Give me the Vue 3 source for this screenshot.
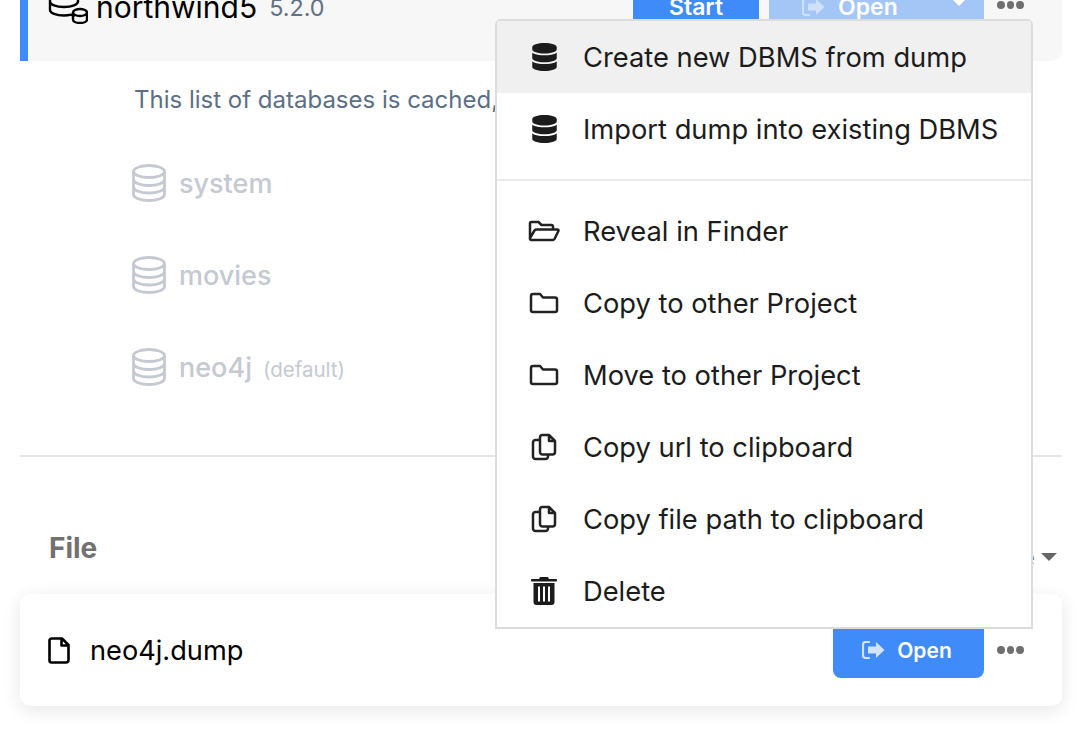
<script setup>
const db = { w: 25, h: 28, vb: '0 0 448 512', fill: true, d: 'M448 73.143v45.714C448 159.143 347.667 192 224 192S0 159.143 0 118.857V73.143C0 32.857 100.333 0 224 0s224 32.857 224 73.143zM448 176v102.857C448 319.143 347.667 352 224 352S0 319.143 0 278.857V176c48.125 33.143 136.208 48.572 224 48.572S399.874 209.143 448 176zm0 160v102.857C448 479.143 347.667 512 224 512S0 479.143 0 438.857V336c48.125 33.143 136.208 48.572 224 48.572S399.874 369.143 448 336z' }
const folderOpen = { w: 32, h: 22, vb: '0 0 32 22', d: 'M2 18V3.5A1.5 1.5 0 0 1 3.5 2h7l3 3h10A1.5 1.5 0 0 1 25 6.500V9M3.500 20A1.500 1.500 0 0 1 2 18L6.500 10.500A2 2 0 0 1 8 9.500H29.500A1 1 0 0 1 30.400 11L26.500 19A2 2 0 0 1 25 20Z' }
const folder = { w: 30, h: 22, vb: '0 0 30 22', d: 'M2 4a2 2 0 0 1 2-2h7l3 3.500h12a2 2 0 0 1 2 2V18a2 2 0 0 1-2 2H4a2 2 0 0 1-2-2z' }
const copy = { w: 26, h: 28, vb: '0 0 26 28', d: 'M9 4.500A2.500 2.500 0 0 1 11.500 2H18l6 6v11a2.500 2.500 0 0 1-2.500 2.500h-10A2.500 2.500 0 0 1 9 19zM18 2v6h6M9 7H4.500A2.500 2.500 0 0 0 2 9.500v14A2.500 2.500 0 0 0 4.500 26h10a2.500 2.500 0 0 0 2.500-2.500v-2' }
const trash = { w: 26, h: 28, vb: '0 0 26 28', fill: true, d: 'M9 0h8l1 2h7a1 1 0 0 1 0 2.500H1A1 1 0 0 1 1 2h7zM2.500 6h21v19a3 3 0 0 1-3 3h-15a3 3 0 0 1-3-3zM7 9.500v15h2v-15zM12 9.500v15h2v-15zM17 9.500v15h2v-15z' }

const groups = [
  [
    { label: 'Create new DBMS from dump', icon: db, active: true },
    { label: 'Import dump into existing DBMS', icon: db }
  ],
  [
    { label: 'Reveal in Finder', icon: folderOpen },
    { label: 'Copy to other Project', icon: folder },
    { label: 'Move to other Project', icon: folder },
    { label: 'Copy url to clipboard', icon: copy },
    { label: 'Copy file path to clipboard', icon: copy },
    { label: 'Delete', icon: trash }
  ]
]
const databases = [
  { name: 'system' },
  { name: 'movies' },
  { name: 'neo4j', note: '(default)' }
]
</script>

<template>
  <div class="page">
    <section class="dbms">
      <div class="dbms-title">
        <svg class="dbms-icon" width="40" height="40" viewBox="0 0 40 40" fill="none" stroke="#000" stroke-width="2.400">
          <ellipse cx="16" cy="9" rx="14" ry="5" />
          <path d="M2 9v17c0 3 6 5.500 14 5.500 2.500 0 5-.3 7-.8M30 9v9M2 17.500c0 3 6 5.500 14 5.500s14-2.500 14-5.500" />
          <path d="M23 30l3 3" />
          <ellipse cx="32" cy="28.500" rx="7" ry="3.500" fill="#f7f7f7" />
          <path d="M25 28.500v7c0 2 3 3.500 7 3.500s7-1.500 7-3.500v-7" />
        </svg>
        <span class="dbms-name">northwind5</span>
        <span class="dbms-version">5.2.0</span>
      </div>
      <div class="dbms-actions">
        <button class="btn start">Start</button>
        <button class="btn open-top">
          <svg class="signin" width="23" height="18" viewBox="0 0 23 18"><path d="M7 1H3.500A2.500 2.500 0 0 0 1 3.500v11A2.500 2.500 0 0 0 3.500 17H7" fill="none" stroke="currentColor" stroke-width="2.200" stroke-linecap="round" /><path d="M14 1l8.500 8-8.500 8v-4.500H6v-7h8z" fill="currentColor" /></svg>
          <span>Open</span>
          <i class="caret-top"></i>
        </button>
        <div class="dots top-dots"><i></i><i></i><i></i></div>
      </div>
    </section>

    <p class="cache-note">This list of databases is cached,</p>

    <ul class="db-list">
      <li v-for="d in databases" :key="d.name" class="db-row">
        <svg width="34" height="38" viewBox="0 0 34 38" fill="none" stroke="#c5c9d1" stroke-width="2.800">
          <ellipse cx="17" cy="7.500" rx="15.500" ry="6" />
          <path d="M1.500 7.500v23c0 3.300 7 6 15.500 6s15.500-2.700 15.500-6v-23M1.500 15.500c0 3.300 7 6 15.500 6s15.500-2.700 15.500-6M1.500 23c0 3.300 7 6 15.500 6s15.500-2.700 15.500-6" />
        </svg>
        <span class="db-name">{{ d.name }}</span>
        <span v-if="d.note" class="db-note">{{ d.note }}</span>
      </li>
    </ul>

    <hr class="rule" />

    <div class="files-head">
      <h2>File</h2>
      <div class="sort"><span>Name</span><i class="caret-sort"></i></div>
    </div>

    <div class="file-card">
      <svg class="file-icon" width="22" height="27" viewBox="0 0 22 27" fill="none" stroke="#000" stroke-width="2.600" stroke-linejoin="round">
        <path d="M1.500 3.500a2 2 0 0 1 2-2H14l6.500 6.500v15a2.500 2.500 0 0 1-2.500 2.500H3.500a2 2 0 0 1-2-2zM13.500 1.500v7h7" />
      </svg>
      <span class="file-name">neo4j.dump</span>
      <button class="btn open-file">
        <svg class="signin" width="23" height="18" viewBox="0 0 23 18"><path d="M7 1H3.500A2.500 2.500 0 0 0 1 3.500v11A2.500 2.500 0 0 0 3.500 17H7" fill="none" stroke="currentColor" stroke-width="2.200" stroke-linecap="round" /><path d="M14 1l8.500 8-8.500 8v-4.500H6v-7h8z" fill="currentColor" /></svg>
        <span>Open</span>
      </button>
      <div class="dots"><i></i><i></i><i></i></div>
    </div>

    <div class="menu">
      <div v-for="(group, g) in groups" :key="g" class="menu-group">
        <div v-for="item in group" :key="item.label" class="menu-item" :class="{ active: item.active }">
          <span class="menu-icon">
            <svg :width="item.icon.w" :height="item.icon.h" :viewBox="item.icon.vb">
              <path v-if="item.icon.fill" :d="item.icon.d" fill="#1c1c1c" fill-rule="evenodd" />
              <path v-else :d="item.icon.d" fill="none" stroke="#222" stroke-width="2.500" stroke-linejoin="round" />
            </svg>
          </span>
          <span>{{ item.label }}</span>
        </div>
      </div>
    </div>
  </div>
</template>

<style>
html, body { margin: 0; background: #fff; overflow: hidden; }
</style>

<style scoped>
.page {
  position: relative;
  height: 732px;
  overflow: hidden;
  padding: 0 20px;
  box-sizing: border-box;
  font-family: Inter, "Liberation Sans", sans-serif;
  color: #000;
}
.dbms {
  margin-top: -40px;
  height: 101px;
  background: #f7f7f7;
  border-left: 8px solid #3f8bfa;
  border-radius: 0 0 10px 0;
  padding: 0 38px 0 20px;
  display: flex;
  justify-content: space-between;
  box-sizing: border-box;
}
.dbms-title { display: flex; align-items: center; height: 94px; }
.dbms-icon { margin-right: 8px; margin-bottom: 6px; flex: none; }
.dbms-name { font-size: 30px; font-weight: 400; }
.dbms-version { font-size: 23.300px; color: #5f7286; margin-left: 12px; }
.dbms-actions { display: flex; align-items: center; height: 94px; }
.btn {
  border: 0;
  font-family: inherit;
  font-size: 21px;
  font-weight: 600;
  color: #fff;
  display: flex;
  align-items: center;
  justify-content: center;
  height: 56px;
  padding: 0;
}
.signin { margin-right: 12px; color: #d3e3fd; }
.start { width: 126px; background: #3f8bfa; border-radius: 8px; margin-right: 10px; font-size: 23px; }
.open-top {
  width: 215px;
  background: #a4c6f7;
  border-radius: 8px;
  position: relative;
  justify-content: flex-start;
  padding-left: 33px;
  box-sizing: border-box;
  font-size: 23px;
}
.open-top .signin { color: #cfe0fb; margin-right: 13px; }
.caret-top {
  position: absolute;
  right: 17px;
  top: 19px;
  border: 8px solid transparent;
  border-top-color: #fff;
  border-bottom: 0;
}
.dots { display: flex; gap: 2px; margin-left: 13px; width: 27px; flex: none; }
.dots i { width: 8px; height: 8px; border-radius: 50%; background: #6f6f6f; }
.top-dots { margin-bottom: 4px; }
.cache-note {
  margin: 24px 0 0 114px;
  font-size: 24px;
  line-height: 30px;
  color: #5c6f84;
}
.db-list { list-style: none; margin: 49px 0 0 112px; padding: 0; display: flex; flex-direction: column; gap: 54px; }
.db-row { display: flex; align-items: center; height: 38px; color: #c5c9d1; }
.db-name { font-size: 27px; font-weight: 500; margin-left: 13px; }
.db-note { font-size: 20.500px; margin-left: 11px; margin-top: 4px; }
.rule { border: 0; border-top: 2px solid #e6e6e6; margin: 69px 0 0; }
.files-head {
  display: flex;
  justify-content: space-between;
  align-items: center;
  padding: 0 5px 0 29px;
  margin-top: 73px;
  height: 36px;
  color: #717171;
}
.files-head h2 { margin: 0; font-size: 28px; font-weight: 700; }
.sort { display: flex; align-items: center; font-size: 24px; margin-top: 18px; }
.caret-sort {
  margin-left: 6px;
  border: 8px solid transparent;
  border-top-color: #666;
  border-bottom: 0;
}
.file-card {
  margin-top: 28px;
  height: 112px;
  border-radius: 10px;
  background: #fff;
  box-shadow: 0 4px 18px rgba(0, 0, 0, 0.1);
  display: flex;
  align-items: center;
  padding: 0 38px 0 28px;
  box-sizing: border-box;
}
.file-icon { flex: none; }
.file-name { font-size: 27.200px; margin-left: 20px; flex: 1; }
.open-file { width: 151px; background: #3f8bfa; border-radius: 8px; padding-right: 3px; box-sizing: border-box; }
.menu {
  position: absolute;
  left: 495px;
  top: 19px;
  width: 538px;
  height: 610px;
  box-sizing: border-box;
  background: #fff;
  border: 2px solid #dcdcdc;
  border-radius: 6px 6px 0 0;
  color: #1c1c1c;
  font-size: 27.300px;
}
.menu-group:first-child { padding-bottom: 14px; border-bottom: 2px solid #ebebeb; margin-bottom: 14px; }
.menu-item { height: 72px; display: flex; align-items: center; padding-left: 31px; }
.menu-item.active { background: #f0f0f0; }
.menu-icon { width: 32px; margin-right: 23px; display: flex; justify-content: center; flex: none; }
</style>
